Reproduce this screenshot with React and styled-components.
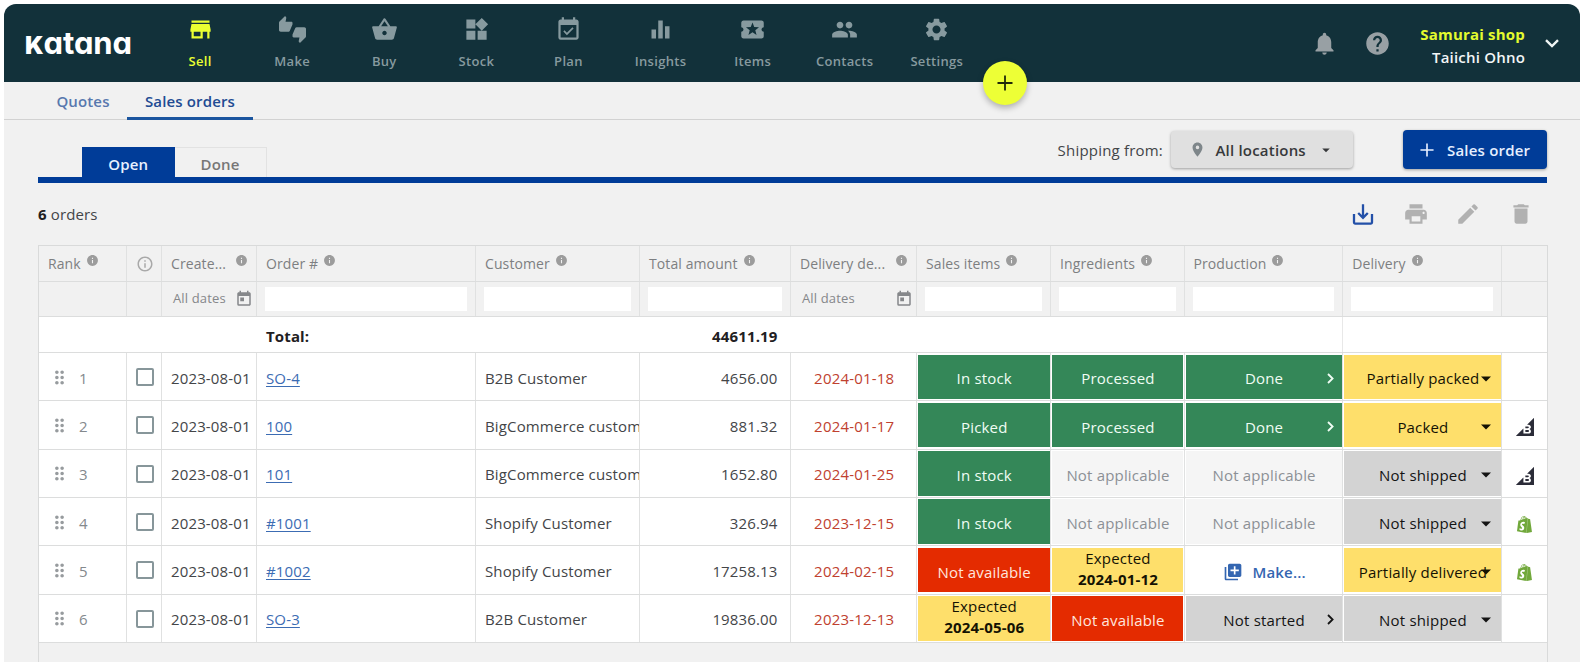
import styled, { createGlobalStyle, css } from "styled-components"
import {
    MdStore, MdThumbsUpDown, MdShoppingBasket, MdWidgets, MdEventAvailable, MdEqualizer,
    MdLocalActivity, MdPeople, MdSettings, MdNotifications, MdHelp, MdPlace, MdArrowDropDown,
    MdPrint, MdEdit, MdDelete, MdInfo, MdInfoOutline, MdToday, MdDragIndicator, MdLibraryAdd
} from "react-icons/md"
import { SiBigcommerce, SiShopify } from "react-icons/si"

const GlobalStyle = createGlobalStyle`
    * {
        box-sizing: border-box;
    }
    body {
        margin: 0;
        background-color: white;
        font-family: "Open Sans", "Noto Sans", sans-serif;
        font-size: 15px;
        letter-spacing: 0.14px;
        color: #434548;
    }
    svg {
        display: block;
        flex-shrink: 0;
    }
`
const Container = styled.div`
    height: 658px;
    margin: 4px 0 0 4px;
    border-radius: 12px 12px 0 0;
    background-color: #f1f1f1;
    overflow: hidden;
    display: flex;
    flex-direction: column;
`

/* Navbar */
const Nav = styled.div`
    position: relative;
    flex: none;
    height: 78px;
    padding-left: 21px;
    background-color: #12313a;
    display: flex;
`
const Logo = styled.div`
    width: 129px;
    height: 78px;
    color: white;
    font-family: Inter, sans-serif;
    font-size: 31px;
    font-weight: 700;
    line-height: 78px;
    letter-spacing: -0.1px;
    font-feature-settings: "cv11";
    white-space: nowrap;
`
const LogoCap = styled.span`
    font-size: 24.5px;
    font-weight: 900;
`
const NavItem = styled.div`
    width: 92.1px;
    padding-top: 12px;
    display: flex;
    flex-direction: column;
    align-items: center;
    color: ${props => props.$active ? "#eaff32" : "#879a9f"};
    font-size: 13px;
    font-weight: 600;
    letter-spacing: 0.3px;
    line-height: 18px;
`
const NavLabel = styled.span`
    margin-top: 9px;
`
const NavRight = styled.div`
    margin-left: auto;
    padding-right: 21px;
    display: flex;
    align-items: center;
    color: #98a0a4;
`
const Help = styled.div`
    margin: 0 22px 0 26px;
`
const User = styled.div`
    width: 112px;
    padding-top: 5px;
    color: #f3f6f6;
    font-weight: 600;
    line-height: 23px;
    letter-spacing: 0.2px;
    text-align: right;
    margin: 0 20px 0 0;
`
const Shop = styled.div`
    color: #e4fb2e;
    font-weight: 700;
`
const Fab = styled.div`
    position: absolute;
    left: 979px;
    top: 56.5px;
    width: 44px;
    height: 44px;
    border-radius: 50%;
    background-color: #edff36;
    box-shadow: 0 3px 6px rgba(0, 0, 0, 0.28);
    display: flex;
    align-items: center;
    justify-content: center;
    color: #20290a;
    z-index: 2;
`

/* Section tabs */
const SubNav = styled.div`
    flex: none;
    height: 38px;
    border-bottom: 1px solid #d2d2d2;
    padding-left: 35px;
    display: flex;
`
const SubTab = styled.div`
    width: ${props => props.$width};
    height: 38px;
    border-bottom: 3px solid ${props => props.$active ? "#1b559f" : "transparent"};
    color: ${props => props.$active ? "#214b93" : "#5878ae"};
    font-weight: 600;
    line-height: 39px;
    text-align: center;
`

/* Page content */
const Content = styled.div`
    flex: 1;
    min-height: 0;
    padding: 0 33px 0 34px;
    display: flex;
    flex-direction: column;
`
const TabBar = styled.div`
    flex: none;
    height: 63px;
    padding-left: 44px;
    border-bottom: 6px solid #003c98;
    display: flex;
    align-items: flex-end;
`
const Tab = styled.div`
    width: ${props => props.$width};
    height: 30px;
    line-height: 34px;
    text-align: center;
    font-weight: 600;
    ${props => props.$active ? css`
        background-color: #003c98;
        color: #e9f1ff;
    ` : css`
        border: 1px solid #e2e2e2;
        border-width: 1px 1px 0 0;
        line-height: 32px;
        color: #777;
    `}
`
const Actions = styled.div`
    margin-left: auto;
    height: 57px;
    display: flex;
    align-items: flex-start;
    padding-top: 10px;
`
const ActionLabel = styled.div`
    margin-right: 8px;
    line-height: 40px;
    letter-spacing: 0.2px;
`
const Button = styled.div`
    display: flex;
    align-items: center;
    border-radius: 4px;
    font-weight: 600;
    letter-spacing: 0.2px;
`
const LocationButton = styled(Button)`
    width: 182px;
    height: 37px;
    margin: 1px 50px 0 0;
    padding: 0 18px 0 18px;
    background-color: #e0e0e0;
    box-shadow: 0 1px 3px rgba(0, 0, 0, 0.35);
    color: #37393b;
`
const Pin = styled.span`
    color: #7e868a;
    margin-right: 9.5px;
`
const Caret = styled.span`
    margin-left: auto;
`
const PrimaryButton = styled(Button)`
    width: 144px;
    height: 39px;
    padding-left: 17px;
    gap: 13px;
    background-color: #003c98;
    box-shadow: 0 1px 3px rgba(0, 0, 0, 0.35);
    color: #e6efff;
`
const Toolbar = styled.div`
    flex: none;
    height: 62px;
    display: flex;
    align-items: center;
    justify-content: space-between;
`
const Bold = styled.b`
    color: #1f2022;
`
const Tools = styled.div`
    display: flex;
    gap: 26.7px;
    padding-right: 13px;
    color: #b1b1b1;
`

/* Table */
const Table = styled.div`
    flex: 1;
    border: 1px solid #d9dada;
    border-bottom: none;
    width: 1509.5px;
`
const Row = styled.div`
    display: grid;
    grid-template-columns: 88px 35px 95px 219px 164px 151px 126px 134px 133.5px 158.7px 159px 44.3px;
    height: ${props => props.$height || "48.33px"};
    background-color: ${props => props.$head ? "transparent" : "white"};
    border-bottom: 1px solid #dcdddd;
`
const Cell = styled.div`
    position: relative;
    min-width: 0;
    display: flex;
    align-items: center;
    justify-content: ${props => props.$align || "flex-start"};
    padding: 2px 12.5px 0 9px;
    overflow: hidden;
    white-space: nowrap;
    border-right: 1px solid #e0e1e1;
    &:last-child {
        border-right: none;
    }
`
const TotalCell = styled(Cell)`
    border-right-color: ${props => props.$line ? "#e8e8e8" : "transparent"};
    color: #1f2022;
    font-weight: 700;
    padding-top: 3px;
`
const HeadCell = styled(Cell)`
    font-size: 14px;
    letter-spacing: 0.1px;
    color: #7d7f81;
    padding-top: 0;
    ${props => props.$push && css`
        padding-right: 8px;
    `}
`
const InfoMark = styled.span`
    color: #9c9c9c;
    margin: -7px 0 0 5px;
    margin-left: ${props => props.$push ? "auto" : "5px"};
`
const FilterCell = styled(Cell)`
    padding: 0 8px;
`
const FilterInput = styled.div`
    width: 100%;
    height: 24px;
    background-color: white;
`
const DateFilter = styled.div`
    flex: 1;
    display: flex;
    align-items: center;
    justify-content: space-between;
    font-size: 13px;
    color: #85878a;
    padding-left: 3px;
    margin: -2px -5px 0 0;
`
const DateIcon = styled.span`
    margin-top: 2px;
`
const Rank = styled.span`
    color: #84898d;
    margin-left: 9px;
`
const Drag = styled.span`
    color: #979b9e;
    margin: -1px 0 0 1px;
`
const Checkbox = styled.div`
    flex: none;
    width: 18px;
    height: 18px;
    margin-top: -1px;
    border: 2px solid #87969a;
    border-radius: 2px;
`
const OrderLink = styled.a`
    color: #3c6cb3;
    text-decoration: underline;
    text-underline-offset: 2px;
`
const Late = styled.span`
    color: #c0412f;
    letter-spacing: 0.2px;
    margin-right: -5px;
`
const SourceIcon = styled.span`
    margin: 3px 0 0 4.5px;
`
const tones = {
    green: ["#348758", "#f0fdf4"],
    yellow: ["#fedf6b", "#141203"],
    red: ["#e42b00", "#ffe6de"],
    gray: ["#d3d3d3", "#141414"],
    none: ["#f5f5f5", "#8c9095"],
    link: ["white", "#3466b1"],
}
const StatusCell = styled(Cell)`
    padding: 1.5px 0.5px 1.3px 1px;
    align-items: stretch;
`
const StatusBox = styled.div`
    position: relative;
    flex: 1;
    display: flex;
    flex-direction: column;
    align-items: center;
    justify-content: center;
    padding: 3.5px 0 0 1px;
    background-color: ${props => tones[props.$tone][0]};
    color: ${props => tones[props.$tone][1]};
    font-weight: ${props => props.$tone === "none" ? 400 : 500};
    letter-spacing: 0.18px;
    line-height: 20.5px;
`
const Expected = styled.div`
    text-align: center;
    margin-top: -6.5px;
`
const MakeLink = styled.div`
    display: flex;
    align-items: center;
    gap: 9px;
    font-weight: 600;
    padding-left: 1px;
`
const StatusIcon = styled.span`
    position: absolute;
    right: ${props => props.$right};
    top: 50%;
    transform: translateY(calc(1.5px - 50%));
`

const Plus = ({ size, width }) => (
    <svg width={size} height={size} viewBox="0 0 16 16" stroke="currentColor" strokeWidth={width} fill="none">
        <path d="M8 0.5v15M0.5 8h15" />
    </svg>
)
const Chevron = () => (
    <svg width="14" height="9" viewBox="0 0 14 9" stroke="#eef3f3" strokeWidth="2.4" fill="none">
        <path d="M1 1.2l6 5.8 6-5.8" />
    </svg>
)
const Arrow = () => (
    <svg width="7" height="11" viewBox="0 0 7 11" stroke="currentColor" strokeWidth="1.8" fill="none">
        <path d="M1 1l4.6 4.5L1 10" />
    </svg>
)
const DownloadIcon = () => (
    <svg width="26" height="26" viewBox="0 0 26 26" stroke="#2350a8" strokeWidth="2.3" fill="none">
        <path d="M4 13v8.6q0 1 1 1h16q1 0 1-1V13" />
        <path d="M13 3.2v13.4M8.2 12l4.8 4.8 4.8-4.8" />
    </svg>
)

const navItems = [
    ["Sell", MdStore], ["Make", MdThumbsUpDown], ["Buy", MdShoppingBasket],
    ["Stock", MdWidgets], ["Plan", MdEventAvailable], ["Insights", MdEqualizer],
    ["Items", MdLocalActivity], ["Contacts", MdPeople], ["Settings", MdSettings],
]

const columns = [
    "Rank", null, "Create...", "Order #", "Customer", "Total amount", "Delivery de...",
    "Sales items", "Ingredients", "Production", "Delivery", "",
]

const orders = [
    { id: "SO-4", customer: "B2B Customer", amount: "4656.00", due: "2024-01-18",
        items: ["green", "In stock"], ingredients: ["green", "Processed"],
        production: ["green", "Done", "arrow"], delivery: ["yellow", "Partially packed", "caret"] },
    { id: "100", customer: "BigCommerce custom", amount: "881.32", due: "2024-01-17",
        items: ["green", "Picked"], ingredients: ["green", "Processed"],
        production: ["green", "Done", "arrow"], delivery: ["yellow", "Packed", "caret"], source: "bigcommerce" },
    { id: "101", customer: "BigCommerce custom", amount: "1652.80", due: "2024-01-25",
        items: ["green", "In stock"], ingredients: ["none", "Not applicable"],
        production: ["none", "Not applicable"], delivery: ["gray", "Not shipped", "caret"], source: "bigcommerce" },
    { id: "#1001", customer: "Shopify Customer", amount: "326.94", due: "2023-12-15",
        items: ["green", "In stock"], ingredients: ["none", "Not applicable"],
        production: ["none", "Not applicable"], delivery: ["gray", "Not shipped", "caret"], source: "shopify" },
    { id: "#1002", customer: "Shopify Customer", amount: "17258.13", due: "2024-02-15",
        items: ["red", "Not available"], ingredients: ["yellow", "Expected", "date", "2024-01-12"],
        production: ["link", "Make..."], delivery: ["yellow", "Partially delivered", "caret"], source: "shopify" },
    { id: "SO-3", customer: "B2B Customer", amount: "19836.00", due: "2023-12-13",
        items: ["yellow", "Expected", "date", "2024-05-06"], ingredients: ["red", "Not available"],
        production: ["gray", "Not started", "arrow"], delivery: ["gray", "Not shipped", "caret"] },
]

const Status = ({ value }) => {
    const [tone, text, extra, date] = value
    return (
        <StatusCell>
            <StatusBox $tone={tone}>
                {tone === "link" && <MakeLink><MdLibraryAdd size={20} />{text}</MakeLink>}
                {extra === "date" && <Expected>{text}<br /><b>{date}</b></Expected>}
                {tone !== "link" && extra !== "date" && text}
                {extra === "arrow" && <StatusIcon $right="8px"><Arrow /></StatusIcon>}
                {extra === "caret" && <StatusIcon $right="3px"><MdArrowDropDown size={24} /></StatusIcon>}
            </StatusBox>
        </StatusCell>
    )
}

const Navbar = () => (
    <Nav>
        <Logo><LogoCap>K</LogoCap>atana</Logo>
        {navItems.map(([label, Icon], index) => (
            <NavItem key={label} $active={index === 0}>
                <Icon size={27} />
                <NavLabel>{label}</NavLabel>
            </NavItem>
        ))}
        <NavRight>
            <MdNotifications size={27} />
            <Help><MdHelp size={27} /></Help>
            <User><Shop>Samurai shop</Shop>Taiichi Ohno</User>
            <Chevron />
        </NavRight>
        <Fab><Plus size={16} width={1.8} /></Fab>
    </Nav>
)

const TableHead = () => (
    <>
        <Row $head $height="36px">
            {columns.map((title, index) => (
                title === null
                    ? <HeadCell key={index}><MdInfoOutline size={18} color="#a9a9a9" /></HeadCell>
                    : <HeadCell key={index} $push={title.endsWith("...")}>
                        {title}
                        {title && <InfoMark $push={title.endsWith("...")}><MdInfo size={13} /></InfoMark>}
                    </HeadCell>
            ))}
        </Row>
        <Row $head $height="35px">
            {columns.map((title, index) => (
                <FilterCell key={index}>
                    {title && title.endsWith("...") && (
                        <DateFilter>All dates<DateIcon><MdToday size={18} /></DateIcon></DateFilter>
                    )}
                    {title && title !== "Rank" && !title.endsWith("...") && <FilterInput />}
                </FilterCell>
            ))}
        </Row>
        <Row $height="36px">
            {columns.map((title, index) => (
                <TotalCell key={index} $line={title === "Production"} $align={index === 5 && "flex-end"}>
                    {index === 3 && "Total:"}
                    {index === 5 && "44611.19"}
                </TotalCell>
            ))}
        </Row>
    </>
)

const OrderRow = ({ order, rank }) => (
    <Row>
        <Cell><Drag><MdDragIndicator size={21} /></Drag><Rank>{rank}</Rank></Cell>
        <Cell><Checkbox /></Cell>
        <Cell>2023-08-01</Cell>
        <Cell><OrderLink>{order.id}</OrderLink></Cell>
        <Cell>{order.customer}</Cell>
        <Cell $align="flex-end">{order.amount}</Cell>
        <Cell $align="center"><Late>{order.due}</Late></Cell>
        <Status value={order.items} />
        <Status value={order.ingredients} />
        <Status value={order.production} />
        <Status value={order.delivery} />
        <Cell>
            <SourceIcon>
                {order.source === "bigcommerce" && <SiBigcommerce size={18} color="#2b2c38" />}
                {order.source === "shopify" && <SiShopify size={17} color="#71a83b" />}
            </SourceIcon>
        </Cell>
    </Row>
)

const App = () => {
    return (
        <Container>
            <GlobalStyle />
            <Navbar />
            <SubNav>
                <SubTab $width="88px">Quotes</SubTab>
                <SubTab $width="126px" $active>Sales orders</SubTab>
            </SubNav>
            <Content>
                <TabBar>
                    <Tab $width="92.5px" $active>Open</Tab>
                    <Tab $width="92px">Done</Tab>
                    <Actions>
                        <ActionLabel>Shipping from:</ActionLabel>
                        <LocationButton>
                            <Pin><MdPlace size={17} /></Pin>
                            All locations
                            <Caret><MdArrowDropDown size={18} /></Caret>
                        </LocationButton>
                        <PrimaryButton><Plus size={14} width={1.9} />Sales order</PrimaryButton>
                    </Actions>
                </TabBar>
                <Toolbar>
                    <span><Bold>6</Bold> orders</span>
                    <Tools>
                        <DownloadIcon />
                        <MdPrint size={26} />
                        <MdEdit size={26} />
                        <MdDelete size={26} />
                    </Tools>
                </Toolbar>
                <Table>
                    <TableHead />
                    {orders.map((order, index) => (
                        <OrderRow key={order.id} order={order} rank={index + 1} />
                    ))}
                </Table>
            </Content>
        </Container>
    )
}

export default App
